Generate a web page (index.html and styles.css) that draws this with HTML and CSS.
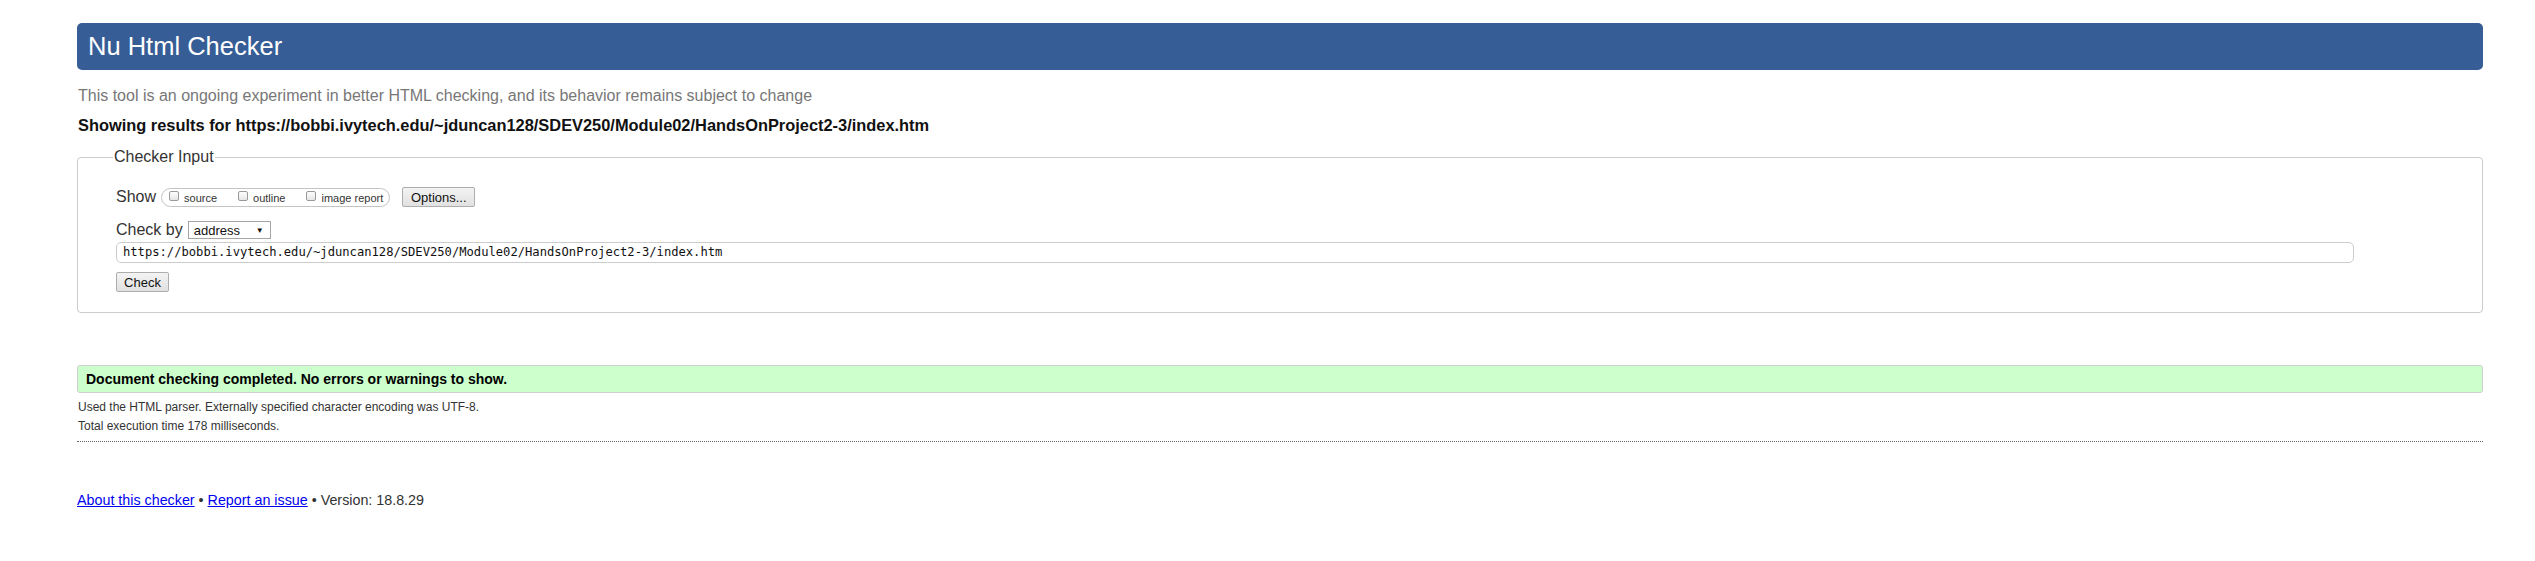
FILE: index.html
```html
<!DOCTYPE html>
<html lang="en">
<head>
<meta charset="utf-8">
<title>Nu Html Checker</title>
<link rel="stylesheet" href="styles.css">
</head>
<body>
<div class="page">
  <h1 class="title">Nu Html Checker</h1>
  <p class="intro">This tool is an ongoing experiment in better HTML checking, and its behavior remains subject to change</p>
  <p class="showing">Showing results for https://bobbi.ivytech.edu/~jduncan128/SDEV250/Module02/HandsOnProject2-3/index.htm</p>

  <fieldset class="input-box">
    <legend class="legend">Checker Input</legend>
    <div class="row show-row">
      <span class="row-label">Show</span>
      <span class="pill">
        <span class="opt"><span class="cb"></span><span class="opt-label">source</span></span>
        <span class="opt"><span class="cb"></span><span class="opt-label">outline</span></span>
        <span class="opt"><span class="cb"></span><span class="opt-label">image report</span></span>
      </span>
      <span class="btn btn-options">Options...</span>
    </div>
    <div class="row by-row">
      <span class="row-label">Check by</span>
      <span class="select"><span>address</span><span class="arrow">&#9660;</span></span>
    </div>
    <div class="url">https://bobbi.ivytech.edu/~jduncan128/SDEV250/Module02/HandsOnProject2-3/index.htm</div>
    <div class="btn-row"><span class="btn btn-check">Check</span></div>
  </fieldset>

  <p class="success">Document checking completed. No errors or warnings to show.</p>
  <p class="meta">Used the HTML parser. Externally specified character encoding was UTF-8.</p>
  <p class="meta">Total execution time 178 milliseconds.</p>
  <hr class="sep">

  <p class="footer"><a href="#">About this checker</a> &bull; <a href="#">Report an issue</a> &bull; Version: 18.8.29</p>
</div>
</body>
</html>
```

FILE: styles.css
```css
* { box-sizing: border-box; }
html, body { margin: 0; padding: 0; background: #fff; }
body {
  font-family: "Liberation Sans", Arial, sans-serif;
  color: #222;
}
.page {
  width: 2406px;
  margin-left: 77px;
  padding-top: 23px;
}
.title {
  margin: 0;
  height: 47px;
  background: #365d95;
  color: #fff;
  border-radius: 5px;
  font-weight: normal;
  font-size: 25.5px;
  line-height: 47px;
  padding-left: 11px;
}
.intro {
  margin: 16px 0 0 1px;
  font-size: 16px;
  line-height: 20px;
  color: #777;
}
.showing {
  margin: 9px 0 0 1px;
  font-size: 16.4px;
  line-height: 20px;
  font-weight: bold;
  color: #111;
}
.input-box {
  margin: 12px 0 0 0;
  border: 1px solid #ccc;
  border-radius: 4px;
  padding: 20px 20px 20px 38px;
  min-width: 0;
}
.legend {
  padding: 0 1px;
  margin-left: -3px;
  font-size: 16px;
  line-height: 20px;
  color: #333;
}
.row {
  display: flex;
  align-items: center;
}
.show-row { height: 20px; }
.by-row { height: 18px; margin-top: 14px; }
.row-label {
  font-size: 16px;
  color: #333;
}
.show-row .row-label { margin-right: 5px; }
.by-row .row-label { margin-right: 5px; }
.pill {
  display: flex;
  align-items: center;
  height: 19px;
  border: 1px solid #c4c4c4;
  border-radius: 10px;
  padding: 0 6px 0 7px;
  gap: 21px;
}
.opt {
  display: flex;
  align-items: center;
}
.cb {
  width: 10px;
  height: 10px;
  border: 1px solid #9a9a9a;
  border-radius: 2px;
  background: linear-gradient(#fdfdfd, #e6e6e6);
  margin-right: 5px;
  margin-top: -3px;
}
.opt-label {
  font-size: 11px;
  color: #333;
  margin-top: 2px;
}
.btn {
  display: inline-flex;
  align-items: center;
  justify-content: center;
  height: 20px;
  border: 1px solid #adadad;
  border-radius: 2px;
  background: linear-gradient(#f3f3f3, #e1e1e1);
  font-size: 13px;
  color: #111;
}
.btn-options {
  width: 73px;
  margin-left: 12px;
}
.select {
  display: flex;
  align-items: center;
  justify-content: space-between;
  width: 83px;
  height: 18px;
  border: 1px solid #a6a6a6;
  background: #fff;
  font-size: 13px;
  color: #111;
  padding: 0 6px 0 5px;
}
.arrow { font-size: 8px; }
.url {
  margin-top: 3px;
  width: 2238px;
  height: 21px;
  border: 1px solid #ccc;
  border-radius: 5px;
  font-family: "DejaVu Sans Mono", "Liberation Mono", monospace;
  font-size: 12.15px;
  line-height: 19px;
  padding-left: 6px;
  color: #111;
}
.btn-row { margin-top: 9px; display: flex; }
.btn-check { width: 53px; }
.success {
  margin: 52px 0 0 0;
  height: 28px;
  background: #ccffcc;
  border: 1px solid #cfcfcf;
  border-radius: 3px;
  font-size: 14px;
  font-weight: bold;
  line-height: 26px;
  padding-left: 8px;
  color: #000;
}
.meta {
  margin: 0 0 0 1px;
  font-size: 12px;
  line-height: 19px;
  color: #333;
}
.success + .meta { margin-top: 5px; }
.sep {
  margin: 5px 0 0 0;
  border: 0;
  border-top: 1px dotted #666;
  height: 0;
}
.footer {
  margin: 49px 0 0 0;
  font-size: 14.3px;
  line-height: 18px;
  color: #333;
}
.footer a { color: #0000ee; }
```
